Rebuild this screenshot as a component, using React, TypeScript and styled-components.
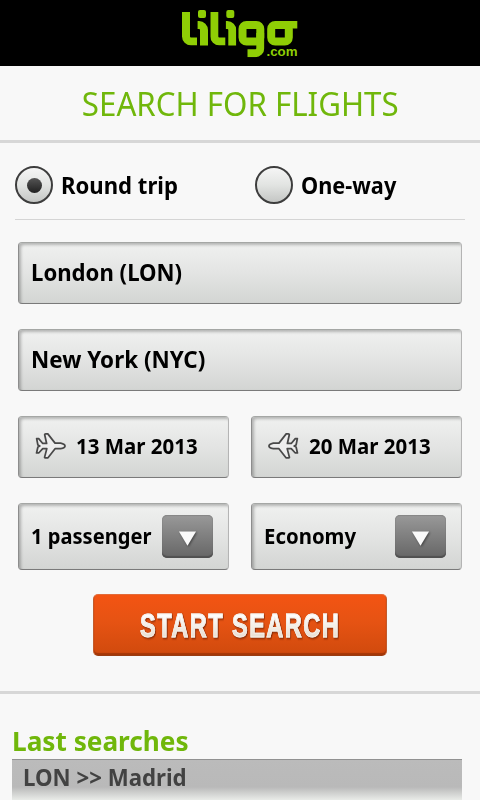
import React from "react";
import styled, { createGlobalStyle, css } from "styled-components";

const GlobalStyle = createGlobalStyle`
  * { box-sizing: border-box; }
  html, body { margin: 0; height: 100%; overflow: hidden; background: #f8f8f8; }
  body { font-family: "Noto Sans", "Open Sans", sans-serif; color: #000; }
  button { font: inherit; color: inherit; }
`;

const Screen = styled.main`
  width: 480px;
  height: 800px;
  overflow: hidden;
  display: flex;
  flex-direction: column;
  background: #f8f8f8;
`;

const TopBar = styled.header`
  height: 66px;
  flex: none;
  display: flex;
  justify-content: center;
  background: #000;
`;

const Label = styled.span<{ $size: number; $stretch?: number }>`
  display: inline-block;
  white-space: nowrap;
  font-size: ${(p) => p.$size}px;
  font-weight: 700;
  line-height: 32px;
  transform: scaleX(${(p) => p.$stretch ?? 1});
  transform-origin: left center;
`;

const TitleBar = styled.div`
  height: 77px;
  flex: none;
  display: flex;
  justify-content: center;
  border-bottom: 3px solid #d7d7d7;
`;

const Title = styled.h1`
  margin: 0;
  font-size: 33px;
  font-weight: 400;
  line-height: 76px;
  color: #70b70b;
  white-space: nowrap;
  transform: scaleX(0.947);
`;

const TripOptions = styled.div`
  height: 77px;
  flex: none;
  margin: 0 15px;
  padding-top: 23px;
  display: grid;
  grid-template-columns: 240px 1fr;
  align-items: start;
  border-bottom: 1px solid #d5d5d5;
`;

const Option = styled.label`
  display: flex;
  align-items: center;
  gap: 8px;
  height: 38px;
`;

const Radio = styled.span`
  width: 38px;
  height: 38px;
  flex: none;
  display: grid;
  place-items: center;
  border: 2px solid #3d3d3d;
  border-radius: 50%;
  background: linear-gradient(#f5f5f5, #e2e4e2 50%, #c4c6c4);
`;

const RadioDot = styled.span`
  width: 15px;
  height: 15px;
  border-radius: 50%;
  background: linear-gradient(#555, #202020);
`;

const Form = styled.section`
  flex: none;
  height: 471px;
  padding: 22px 18px 0;
  display: flex;
  flex-direction: column;
  align-items: center;
  gap: 25px;
`;

const Pair = styled.div`
  width: 100%;
  display: grid;
  grid-template-columns: 211px 211px;
  justify-content: space-between;
`;

const Field = styled.button<{ $tall?: boolean }>`
  width: 100%;
  height: ${(p) => (p.$tall ? 67 : 62)}px;
  display: flex;
  align-items: center;
  padding: 0 15px 2px 12px;
  border: 1px solid;
  border-color: #a5a7a5 #b4b4b4 #7a7a7a #8d8d8d;
  border-radius: 4px;
  text-align: left;
  background: linear-gradient(#f0f1f0, #e3e4e3 50%, #d3d5d3);
  box-shadow: inset 2px 2px 3px rgba(0, 0, 0, 0.25);
  ${(p) =>
    p.$tall &&
    css`
      justify-content: space-between;
    `}
`;

const PlaneIcon = styled.svg<{ $flip?: boolean }>`
  width: 31px;
  height: 28px;
  flex: none;
  margin: -1px 10px 0 4px;
  transform: ${(p) => (p.$flip ? "scaleX(-1)" : "none")};
`;

const DropButton = styled.span`
  width: 51px;
  height: 43px;
  flex: none;
  margin-top: 1px;
  display: grid;
  place-items: center;
  border-radius: 5px;
  background: linear-gradient(#999, #848484 40%, #666);
  box-shadow: inset 0 -2px 1px #505050, inset 0 1px 1px #858585;
`;

const Arrow = styled.svg`
  width: 19px;
  height: 18px;
  margin: 5px 1px 0 0;
  overflow: visible;
  filter: drop-shadow(1px 1px 1px rgba(0, 0, 0, 0.45));
`;

const SearchButton = styled.button`
  width: 294px;
  height: 62px;
  margin-top: -1px;
  padding: 2px 0 0 46px;
  border: 1px solid;
  border-color: #e26b3a #c35b2b #9a3c12 #c35b2b;
  border-radius: 5px;
  text-align: left;
  background: linear-gradient(#f35413, #e65313 45%, #d04a0d);
  box-shadow: inset 0 -2px 1px rgba(120, 35, 0, 0.5);
`;

const SearchLabel = styled.span`
  display: inline-block;
  font-family: "Liberation Sans", Arial, sans-serif;
  font-size: 33px;
  font-weight: 700;
  line-height: 40px;
  letter-spacing: 2px;
  white-space: nowrap;
  color: transparent;
  -webkit-text-stroke: 0.9px #f7f2ec;
  background: linear-gradient(#fff 20%, #e8ddd0 80%);
  background-clip: text;
  -webkit-background-clip: text;
  filter: drop-shadow(1px 1px 1px rgba(80, 20, 0, 0.7));
  transform: scaleX(0.715);
  transform-origin: left center;
`;

const History = styled.section`
  flex: 1;
  padding: 31px 18px 0 12px;
  border-top: 3px solid #d7d7d7;
`;

const HistoryTitle = styled.h2`
  margin: 0;
  height: 34px;
  color: #70b70b;
`;

const HistoryRow = styled.div`
  height: 60px;
  padding: 1px 0 0 11px;
  border-top: 1px solid #929292;
  color: #424242;
  background: linear-gradient(#bbb 0, #b9b9b9 27px, #e9ebe8 40px);
`;

const Logo = () => (
  <svg width="140" height="66" viewBox="0 0 140 66" role="img" aria-label="liligo.com">
    <g fill="none" stroke="#8fce05" strokeWidth="8">
      {[0, 28.3].map((dx) => (
        <g key={dx} transform={`translate(${dx} 0)`}>
          <svg x="12" y="12" width="15" height="33.5">
            <rect x="4" y="-20" width="40" height="49.5" rx="5" />
          </svg>
          <rect x="28" y="10" width="8" height="8" rx="2" fill="#8fce05" stroke="none" />
          <svg x="27.6" y="21" width="10.4" height="24.5">
            <rect x="-30" y="4" width="36.4" height="50" rx="5" />
          </svg>
        </g>
      ))}
      <rect x="72.5" y="25" width="17.8" height="16.5" rx="4" />
      <svg x="77.5" y="33" width="17" height="24.3">
        <rect x="-30" y="-20" width="42.8" height="40.2" rx="5" />
      </svg>
      <rect x="101.2" y="25" width="17.6" height="16.5" rx="4" />
      <rect x="114" y="21" width="13.3" height="7.5" fill="#8fce05" stroke="none" />
    </g>
    <text
      x="96.5"
      y="56"
      fill="#8fce05"
      fontFamily="Liberation Sans, Arial, sans-serif"
      fontSize="12.5"
      fontWeight="700"
      textLength="31"
      lengthAdjust="spacingAndGlyphs"
    >
      .com
    </text>
  </svg>
);

const Plane = ({ flip }: { flip?: boolean }) => (
  <PlaneIcon $flip={flip} viewBox="0 0 32 28" aria-hidden="true">
    <path
      d="M1.7 6.4H3.8L8 11.4H12L10 2.4Q10 1.5 11 1.5H13.2L20.7 11H26.5Q31 12 31 14Q31 16 26.5 16.8H20.7L13.4 26.2H10.4Q9.6 26 10 25.2L12.2 16.7H8L3.8 21.2H1.6L3 15L5 14L3 13Z"
      fill="#ededed"
      stroke="#484848"
      strokeWidth="1.8"
      strokeLinejoin="round"
    />
  </PlaneIcon>
);

const Drop = () => (
  <DropButton>
    <Arrow viewBox="0 0 20 18" aria-hidden="true">
      <path d="M1 1H19L10 16Z" fill="#fafafa" />
    </Arrow>
  </DropButton>
);

export default function App() {
  return (
    <>
      <GlobalStyle />
      <Screen>
        <TopBar>
          <Logo />
        </TopBar>
        <TitleBar>
          <Title>SEARCH FOR FLIGHTS</Title>
        </TitleBar>
        <TripOptions>
          <Option>
            <Radio>
              <RadioDot />
            </Radio>
            <Label $size={23} $stretch={0.962}>Round trip</Label>
          </Option>
          <Option>
            <Radio />
            <Label $size={23} $stretch={0.945}>One-way</Label>
          </Option>
        </TripOptions>
        <Form>
          <Field>
            <Label $size={23} $stretch={0.963}>London (LON)</Label>
          </Field>
          <Field>
            <Label $size={23} $stretch={0.975}>New York (NYC)</Label>
          </Field>
          <Pair>
            <Field>
              <Plane />
              <Label $size={21} $stretch={0.975}>13 Mar 2013</Label>
            </Field>
            <Field>
              <Plane flip />
              <Label $size={21} $stretch={0.975}>20 Mar 2013</Label>
            </Field>
          </Pair>
          <Pair>
            <Field $tall>
              <Label $size={21} $stretch={0.957}>1 passenger</Label>
              <Drop />
            </Field>
            <Field $tall>
              <Label $size={21} $stretch={0.97}>Economy</Label>
              <Drop />
            </Field>
          </Pair>
          <SearchButton>
            <SearchLabel>START SEARCH</SearchLabel>
          </SearchButton>
        </Form>
        <History>
          <HistoryTitle>
            <Label $size={26} $stretch={1.007}>Last searches</Label>
          </HistoryTitle>
          <HistoryRow>
            <Label $size={23} $stretch={0.967}>LON &gt;&gt; Madrid</Label>
          </HistoryRow>
        </History>
      </Screen>
    </>
  );
}
